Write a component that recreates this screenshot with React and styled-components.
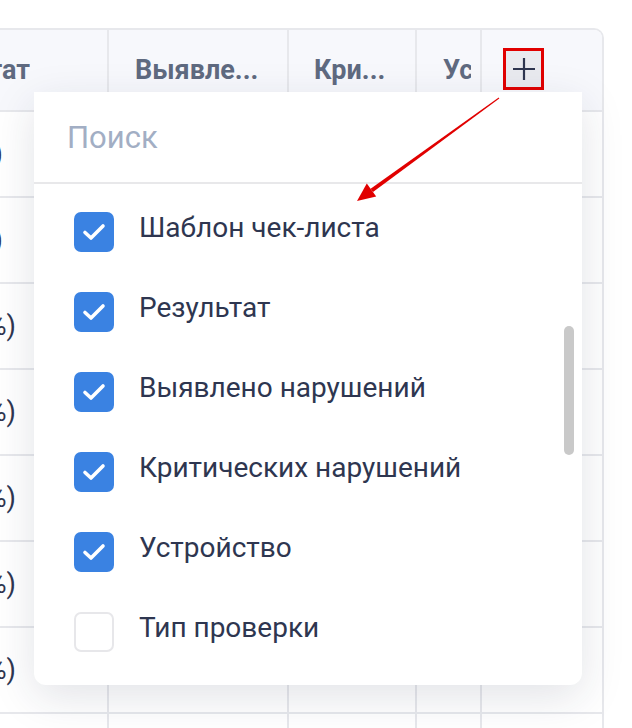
import React from "react";
import styled, { createGlobalStyle } from "styled-components";

const GlobalStyle = createGlobalStyle`
  html, body {
    margin: 0;
    padding: 0;
    background: #ffffff;
  }
  body {
    font-family: Roboto, "Noto Sans", Arial, sans-serif;
  }
`;

const columns = [
  { title: "Результат", align: "end", pad: 77 },
  { title: "Выявле...", align: "start", pad: 26 },
  { title: "Кри...", align: "start", pad: 25 },
  { title: "Устройство", align: "start", pad: 26, clip: 9 },
];

const rows = [")", ")", "%)", "%)", "%)", "%)", "%)", "%)"];

const options = [
  { label: "Шаблон чек-листа", checked: true },
  { label: "Результат", checked: true },
  { label: "Выявлено нарушений", checked: true },
  { label: "Критических нарушений", checked: true },
  { label: "Устройство", checked: true },
  { label: "Тип проверки", checked: false },
];

const Page = styled.div`
  position: relative;
  width: 632px;
  height: 728px;
  overflow: hidden;
  background: #ffffff;
  padding-top: 28px;
  box-sizing: border-box;
`;

const Table = styled.div`
  width: 604px;
  border-top: 2px solid #e7e8ec;
  border-right: 2px solid #e7e8ec;
  border-top-right-radius: 10px;
  box-sizing: border-box;
  overflow: hidden;
`;

const Row = styled.div`
  display: grid;
  grid-template-columns: 109px 180px 128px 65px 1fr;
  height: ${(p) => p.height}px;
  box-sizing: border-box;
  border-bottom: 2px solid #e7e8ec;
  background: ${(p) => (p.head ? "#f7f8fc" : "#ffffff")};
`;

const Cell = styled.div`
  display: flex;
  align-items: center;
  justify-content: ${(p) => (p.align === "end" ? "flex-end" : "flex-start")};
  padding-left: ${(p) => (p.align === "end" ? 0 : p.pad)}px;
  padding-right: ${(p) => (p.align === "end" ? p.pad : p.clip || 0)}px;
  border-right: ${(p) => (p.last ? "none" : "2px solid #e7e8ec")};
  overflow: hidden;
  white-space: nowrap;
  box-sizing: border-box;
  min-width: 0;
`;

const HeadText = styled.span`
  font-size: 27px;
  font-weight: 700;
  color: #5f6a80;
  overflow: hidden;
  flex-shrink: ${(p) => (p.shrink ? 1 : 0)};
`;

const BodyText = styled.span`
  font-size: 27px;
  color: #2e3650;
  flex-shrink: 0;
`;

const AddButton = styled.button`
  width: 41px;
  height: 42px;
  margin-left: 21px;
  margin-top: -2px;
  padding: 0;
  border: 3px solid #e10000;
  background: #e9eaef;
  display: flex;
  align-items: center;
  justify-content: center;
  box-sizing: border-box;
`;

const Dropdown = styled.div`
  position: absolute;
  left: 34px;
  top: 92px;
  width: 548px;
  height: 593px;
  background: #ffffff;
  border-radius: 0 0 12px 12px;
  box-shadow: 0 12px 44px rgba(30, 40, 70, 0.13);
  z-index: 2;
  display: flex;
  flex-direction: column;
`;

const Search = styled.div`
  height: 92px;
  display: flex;
  align-items: center;
  padding-left: 33px;
  font-size: 31px;
  color: #a2aec4;
  border-bottom: 2px solid #e8e8ea;
  flex-shrink: 0;
  box-sizing: border-box;
`;

const List = styled.div`
  position: relative;
  padding: 8px 0 0 40px;
`;

const Option = styled.div`
  height: 80px;
  display: flex;
  align-items: center;
  gap: 25px;
`;

const Box = styled.div`
  width: 40px;
  height: 40px;
  border-radius: 7px;
  box-sizing: border-box;
  background: ${(p) => (p.checked ? "#3a82e2" : "#ffffff")};
  border: ${(p) => (p.checked ? "none" : "2px solid #e7e7ea")};
  display: flex;
  align-items: center;
  justify-content: center;
  flex-shrink: 0;
`;

const Label = styled.span`
  font-size: 28px;
  color: #2e3650;
  margin-bottom: 9px;
`;

const Scrollbar = styled.div`
  position: absolute;
  left: 530px;
  top: 142px;
  width: 10px;
  height: 129px;
  border-radius: 5px;
  background: #c9c9c9;
`;

const Arrow = styled.svg`
  position: absolute;
  left: 0;
  top: 0;
  width: 632px;
  height: 728px;
  pointer-events: none;
  z-index: 3;
`;

const Check = () => (
  <svg width="24" height="20" viewBox="0 0 24 20">
    <path
      d="M3 10.5 L9 16 L21 4"
      fill="none"
      stroke="#ffffff"
      strokeWidth="3.6"
      strokeLinecap="round"
      strokeLinejoin="round"
    />
  </svg>
);

const PlusIcon = () => (
  <svg width="22" height="22" viewBox="0 0 22 22">
    <path d="M11 0 V22 M0 11 H22" stroke="#2f3650" strokeWidth="2.2" />
  </svg>
);

export default function App() {
  return (
    <>
      <GlobalStyle />
      <Page>
        <Table>
          <Row head height={82}>
            {columns.map((c) => (
              <Cell key={c.title} align={c.align} pad={c.pad} clip={c.clip}>
                <HeadText shrink={!!c.clip}>{c.title}</HeadText>
              </Cell>
            ))}
            <Cell last>
              <AddButton>
                <PlusIcon />
              </AddButton>
            </Cell>
          </Row>
          {rows.map((end, i) => (
            <Row key={i} height={86}>
              <Cell align="end" pad={end === ")" ? 104 : 91}>
                <BodyText>{end === ")" ? "12 (0)" : "12 (100%)"}</BodyText>
              </Cell>
              <Cell />
              <Cell />
              <Cell />
              <Cell last />
            </Row>
          ))}
        </Table>

        <Dropdown>
          <Search>Поиск</Search>
          <List>
            {options.map((o) => (
              <Option key={o.label}>
                <Box checked={o.checked}>{o.checked && <Check />}</Box>
                <Label>{o.label}</Label>
              </Option>
            ))}
            <Scrollbar />
          </List>
        </Dropdown>

        <Arrow viewBox="0 0 632 728">
          <polygon
            points="498.7,97.6 499.3,98.4 373.0,192.0 370.6,188.8"
            fill="#e10000"
          />
          <polygon
            points="357,201 376.2,196.6 366.8,183.6"
            fill="#e10000"
          />
        </Arrow>
      </Page>
    </>
  );
}
